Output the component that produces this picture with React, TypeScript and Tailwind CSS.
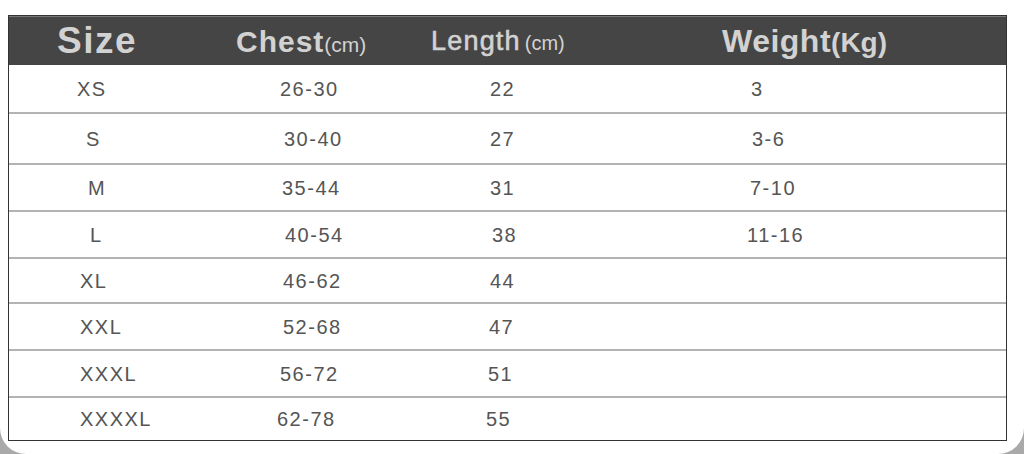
const rows = [
  { h: "h-[47px]", cells: [["XS", "pl-[68px]"], ["26-30", "pl-[80px]"], ["22", "pl-[70px]"], ["3", "pl-[71px]"]] },
  { h: "h-[51px]", cells: [["S", "pl-[77px]"], ["30-40", "pl-[84px]"], ["27", "pl-[70px]"], ["3-6", "pl-[72px]"]] },
  { h: "h-[47px]", cells: [["M", "pl-[79px]"], ["35-44", "pl-[82px]"], ["31", "pl-[70px]"], ["7-10", "pl-[70px]"]] },
  { h: "h-[47px]", cells: [["L", "pl-[81px]"], ["40-54", "pl-[85px]"], ["38", "pl-[72px]"], ["11-16", "pl-[67px]"]] },
  { h: "h-[45px]", cells: [["XL", "pl-[71px]"], ["46-62", "pl-[83px]"], ["44", "pl-[70px]"], ["", "pl-0"]] },
  { h: "h-[47px]", cells: [["XXL", "pl-[71px]"], ["52-68", "pl-[83px]"], ["47", "pl-[69px]"], ["", "pl-0"]] },
  { h: "h-[47px]", cells: [["XXXL", "pl-[71px]"], ["56-72", "pl-[80px]"], ["51", "pl-[68px]"], ["", "pl-0"]] },
  { h: "h-[44px]", cells: [["XXXXL", "pl-[71px]"], ["62-78", "pl-[77px]"], ["55", "pl-[66px]"], ["", "pl-0"]] },
];

const colWidths = ["w-[191px]", "w-[220px]", "w-[260px]", "flex-1"];

export default function App() {
  return (
    <div className="h-[454px] w-[1024px] bg-[#a9a9a9] overflow-hidden">
      <div className="h-full bg-white rounded-b-[26px] pt-[15px] pl-[8px]">
        <div className="w-[999px] border-[1.5px] border-[#333]">
          {/* Header */}
          <div className="h-[49px] bg-[#454545] flex items-center text-[#d2d2d2] font-bold font-['Liberation_Sans',Arial,sans-serif] border-t border-[#777]">
            <div className="w-[191px] pl-[48px] text-[37px] tracking-[1.5px]">Size</div>
            <div className="w-[220px] pl-[36px] flex items-baseline">
              <span className="text-[30px] tracking-[1px]">Chest</span>
              <span className="text-[21px] font-normal">(cm)</span>
            </div>
            <div className="w-[260px] pl-[11px] flex items-baseline">
              <span className="text-[27px] font-normal tracking-[1.2px] [-webkit-text-stroke:0.6px_#d2d2d2]">Length</span>
              <span className="text-[20px] font-normal ml-[4px]">(cm)</span>
            </div>
            <div className="flex-1 pl-[42px] flex items-baseline">
              <span className="text-[32px] tracking-[0.5px]">Weight</span>
              <span className="text-[28px]">(Kg)</span>
            </div>
          </div>
          {/* Body */}
          {rows.map((r, i) => (
            <div
              key={i}
              className={`${r.h} flex items-center text-[20px] tracking-[1.5px] text-[#555] font-['Liberation_Sans',Arial,sans-serif] ${i > 0 ? "border-t-2 border-[#b3b3b3]" : ""}`}
            >
              {r.cells.map(([t, pl], j) => (
                <div key={j} className={`${colWidths[j]} ${pl}`}>
                  {t}
                </div>
              ))}
            </div>
          ))}
        </div>
      </div>
    </div>
  );
}
